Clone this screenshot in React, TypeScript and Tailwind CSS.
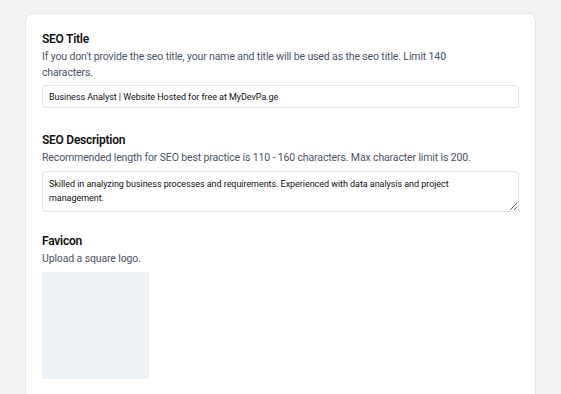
import React from "react";

export default function App() {
  return (
    <div className="min-h-[394px] bg-[#f3f3f3] px-[25px] pt-[13px]" style={{ fontFamily: "Roboto, 'Liberation Sans', sans-serif" }}>
      <div className="rounded-[8px] border border-[#e2e8f0] bg-white px-4 pt-[16px] pb-[30px]">
        <div className="mb-[23px]">
          <h2 className="text-[12px] font-semibold leading-[18px] tracking-[-0.25px] text-[#111]">SEO Title</h2>
          <p className="mt-[1px] max-w-[440px] text-[10.5px] leading-[16px] tracking-[-0.13px] text-[#4a5568]">
            If you don't provide the seo title, your name and title will be used as the seo title. Limit 140 characters.
          </p>
          <input
            readOnly
            value="Business Analyst | Website Hosted for free at MyDevPa.ge"
            className="mt-[4px] block h-[23px] w-full rounded-[4px] border border-[#dfe3ea] bg-white px-[6px] text-[9px] tracking-[-0.05px] text-[#111] outline-none"
          />
        </div>
        <div className="mb-[20px]">
          <h2 className="text-[12px] font-semibold leading-[18px] tracking-[-0.25px] text-[#111]">SEO Description</h2>
          <p className="mt-[1px] max-w-[440px] text-[10.5px] leading-[16px] tracking-[-0.13px] text-[#4a5568]">
            Recommended length for SEO best practice is 110 - 160 characters. Max character limit is 200.
          </p>
          <textarea
            readOnly
            value="Skilled in analyzing business processes and requirements. Experienced with data analysis and project management."
            className="mt-[5px] block h-[41px] w-full resize-y rounded-[4px] border border-[#dfe3ea] bg-white py-[5px] pl-[6px] pr-[14px] text-[9px] leading-[14px] tracking-[-0.05px] text-[#111] outline-none"
          />
        </div>
        <div>
          <h2 className="text-[12px] font-semibold leading-[18px] tracking-[-0.25px] text-[#111]">Favicon</h2>
          <p className="mt-[1px] text-[10.5px] leading-[16px] tracking-[-0.13px] text-[#4a5568]">Upload a square logo.</p>
          <div className="mt-[5px] h-[107px] w-[107px] bg-[#edf2f7]" />
        </div>
      </div>
    </div>
  );
}
